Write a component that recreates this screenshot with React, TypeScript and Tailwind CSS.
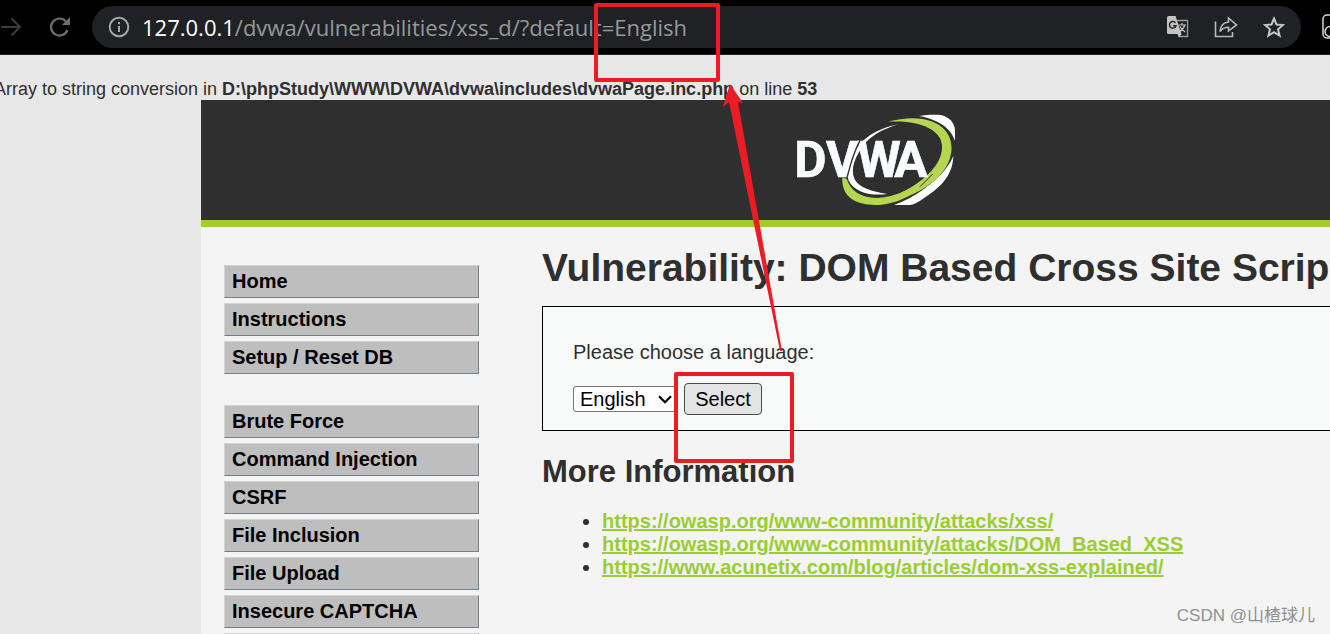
import React from "react";

const groups: string[][] = [
  ["Home", "Instructions", "Setup / Reset DB"],
  ["Brute Force", "Command Injection", "CSRF", "File Inclusion", "File Upload", "Insecure CAPTCHA", "SQL Injection"],
];

const links = [
  "https://owasp.org/www-community/attacks/xss/",
  "https://owasp.org/www-community/attacks/DOM_Based_XSS",
  "https://www.acunetix.com/blog/articles/dom-xss-explained/",
];

function ForwardIcon() {
  return (
    <svg width="22" height="20" viewBox="0 0 22 20" fill="none" stroke="#3c3c3c" strokeWidth="2">
      <path d="M1 10H20M11.500 1.500L20 10L11.500 18.500" />
    </svg>
  );
}

function ReloadIcon() {
  return (
    <svg width="22" height="20" viewBox="0 0 22 20" fill="none" stroke="#6e6e6e" strokeWidth="2.200">
      <path d="M18.500 13A8.500 8.500 0 1 1 17 4.500" />
      <path d="M21 0V8H13Z" fill="#6e6e6e" stroke="none" />
    </svg>
  );
}

function InfoIcon() {
  return (
    <svg width="22" height="22" viewBox="0 0 22 22" fill="none" stroke="#a4a8ac" strokeWidth="2">
      <circle cx="11" cy="11" r="9.300" />
      <path d="M11 10V16M11 6V8.200" />
    </svg>
  );
}

function TranslateIcon() {
  return (
    <svg width="22" height="22" viewBox="0 0 22 22" fill="none">
      <path d="M10 4.500H20.500V20.500H11.500" stroke="#999999" strokeWidth="1.300" />
      <path d="M1.500 0H8.500L14.500 18H1.500Q0 18 0 16.500V1.500Q0 0 1.500 0Z" fill="#c3c3c3" />
      <path d="M10.500 18H14.500L12 21.500Z" fill="#c3c3c3" />
      <path d="M8.500 7A3.300 3.300 0 1 0 9 9.700H6" stroke="#2b2c2f" strokeWidth="1.500" />
      <path d="M11.500 9H19M15 7V9M17.800 9Q16.500 13.500 12.500 15.500M13 10.500Q15 14.500 18.200 16" stroke="#c3c3c3" strokeWidth="1.200" />
    </svg>
  );
}

function ShareIcon() {
  return (
    <svg width="24" height="22" viewBox="0 0 24 22" fill="none" stroke="#b9b9b9" strokeWidth="1.600">
      <path d="M1.500 5.500V20.500H18.500V16" />
      <path d="M6 15.500C6.500 9.500 9.500 6.500 14.500 6V2L22.500 9L14.500 15V11.200C10.500 11.200 8 12.500 6 15.500Z" />
    </svg>
  );
}

function StarIcon() {
  return (
    <svg width="22" height="22" viewBox="0 0 22 22" fill="none" stroke="#c6c6c6" strokeWidth="2">
      <path d="M11 2.500L13.500 8.500L20 9L15 13.300L16.600 19.600L11 16.200L5.400 19.600L7 13.300L2 9L8.500 8.500Z" />
    </svg>
  );
}

function ExtensionIcon() {
  return (
    <svg width="24" height="26" viewBox="0 0 24 26" fill="none" stroke="#d8d8d8" strokeWidth="1.500">
      <rect x="1" y="1" width="22" height="23" rx="4" />
      <circle cx="8" cy="17.500" r="5" />
    </svg>
  );
}

function Logo() {
  return (
    <svg width="160" height="92" viewBox="48 42 480 276" role="img" aria-label="DVWA">
      <path d="M417 48C440 44 465 44 483 45C510 52 524 70 525 90V122C515 92 485 60 417 48Z" fill="#fff" />
      <path d="M520 168C519 222 485 262 429 296Q405 314 389 315H342C375 302 395 291 411 281C465 245 502 210 520 168Z" fill="#fff" />
      <path d="M324 65C385 49 450 50 486 82C512 104 521 138 510 174C496 220 450 262 382 290C330 318 260 325 215 297C193 281 186 258 187 233L200 236C212 272 240 292 290 294C352 292 405 260 445 222C484 185 494 145 480 115C462 82 410 60 324 65Z" fill="#b4d651" />
      <path d="M420 260L458 222" fill="none" stroke="#2f2f2f" strokeWidth="3" />
      <text x="43 138 232 343" y="231" fill="#fafbff" stroke="#fafbff" strokeWidth="2" fontFamily="Roboto, sans-serif" fontWeight="700" fontSize="149">DVWA</text>
      <path d="M355 73C300 84 266 105 240 131C210 166 194 205 206 242C226 279 275 288 322 282C275 275 237 263 224 238C210 205 226 168 252 134C273 107 309 87 355 73Z" fill="#fff" />
      <path d="M240 122Q219 160 202 230" fill="none" stroke="#2f2f2f" strokeWidth="4" />
    </svg>
  );
}

export default function App() {
  return (
    <div className="relative flex h-screen flex-col overflow-hidden bg-[#e7e7e7] font-['Liberation_Sans',Arial,sans-serif] text-[#2f2f2f]">
      <nav className="flex h-[55px] shrink-0 items-center border-b border-[#202124] bg-black">
        <button aria-label="Forward" className="shrink-0"><ForwardIcon /></button>
        <button aria-label="Reload" className="ml-[27px] shrink-0"><ReloadIcon /></button>
        <div className="ml-[21px] flex h-[42px] min-w-0 flex-1 items-center rounded-full bg-[#202124] px-4">
          <InfoIcon />
          <div className="ml-3 flex-1 whitespace-nowrap font-['Open_Sans',sans-serif] text-[22px] text-[#96989b]">
            <span className="text-white">127.0.0.1</span>/dvwa/vulnerabilities/xss_d/?default=English
          </div>
          <div className="flex items-center gap-[25px]">
            <button aria-label="Translate"><TranslateIcon /></button>
            <button aria-label="Share"><ShareIcon /></button>
            <button aria-label="Bookmark"><StarIcon /></button>
          </div>
        </div>
        <button aria-label="Extensions" className="-mr-4 ml-[21px] shrink-0"><ExtensionIcon /></button>
      </nav>

      <p className="-ml-1.5 shrink-0 whitespace-nowrap pt-6 pb-[1px] text-[18px] leading-5">
        Array to string conversion in <b>D:\phpStudy\WWW\DVWA\dvwa\includes\dvwaPage.inc.php</b> on line <b>53</b>
      </p>

      <div className="ml-[201px] flex min-h-0 flex-1 flex-col bg-[#f4f4f4]">
        <header className="flex h-[127px] shrink-0 items-center justify-center border-b-[7px] border-[#a1cc33] bg-[#2f2f2f] pl-[221px]">
          <Logo />
        </header>

        <div className="flex">
          <aside className="ml-[23px] flex w-[255px] shrink-0 flex-col gap-[31px] pt-[38px]">
            {groups.map((items) => (
              <ul key={items[0]} className="flex flex-col gap-[5px]">
                {items.map((item) => (
                  <li key={item}>
                    <a href="#" className="block border border-t-[#d3d3d3] border-r-[#708090] border-b-[#708090] border-l-[#d3d3d3] bg-[#bebebe] px-[7px] text-[20px] leading-[31px] font-bold text-black">
                      {item}
                    </a>
                  </li>
                ))}
              </ul>
            ))}
          </aside>

          <main className="ml-[63px] min-w-0 flex-1 pt-[18px]">
            <h1 className="whitespace-nowrap text-[39px] leading-[46px] font-bold">Vulnerability: DOM Based Cross Site Scripting (XSS)</h1>
            <section className="mt-[15px] border border-r-0 border-black bg-[#f8fafa] px-[30px] pt-[33px] pb-[15px]">
              <label htmlFor="language" className="block text-[20px] leading-6">Please choose a language:</label>
              <form className="mt-[19px] flex items-center gap-[6px]" onSubmit={(e) => e.preventDefault()}>
                <div className="relative">
                  <select id="language" defaultValue="English" className="block h-[26px] w-[105px] appearance-none rounded-[3px] border border-[#767676] bg-white pl-[6px] text-[20px] leading-6 text-black">
                    <option>English</option>
                    <option>French</option>
                    <option>Spanish</option>
                    <option>German</option>
                  </select>
                  <svg className="pointer-events-none absolute top-[9px] right-[6px]" width="14" height="9" viewBox="0 0 14 9" fill="none" stroke="#000" strokeWidth="2.200">
                    <path d="M1 1.200L7 7.200L13 1.200" />
                  </svg>
                </div>
                <button type="submit" className="h-8 w-[78px] rounded-[4px] border border-[#4a4a4a] bg-[#e4e4e4] text-[20px] leading-[30px] text-black">Select</button>
              </form>
            </section>
            <h2 className="mt-[23px] text-[31px] leading-9 font-bold">More Information</h2>
            <ul className="mt-5 list-disc pl-[60px] text-[20px] leading-[23px]">
              {links.map((href) => (
                <li key={href}>
                  <a href={href} className="font-bold text-[#9acd32] underline">{href}</a>
                </li>
              ))}
            </ul>
          </main>
        </div>
      </div>

      <div className="pointer-events-none absolute top-[3px] left-[594px] h-[79px] w-[126px] rounded-[2px] border-4 border-[#ed1c24]" />
      <div className="pointer-events-none absolute top-[372px] left-[674px] h-[91px] w-[120px] rounded-[2px] border-4 border-[#ed1c24]" />
      <svg className="pointer-events-none absolute top-[80px] left-[720px]" width="70" height="280" viewBox="0 0 70 280">
        <path d="M10 4L23 23L18 22L62 271L60 271L9 22L3 27Z" fill="#ed1c24" />
      </svg>
      <p className="pointer-events-none absolute right-[15px] bottom-[6px] font-['Liberation_Sans','Noto_Sans_CJK_SC',sans-serif] text-[17px] leading-6 text-[#909090]">CSDN @山楂球儿</p>
    </div>
  );
}
